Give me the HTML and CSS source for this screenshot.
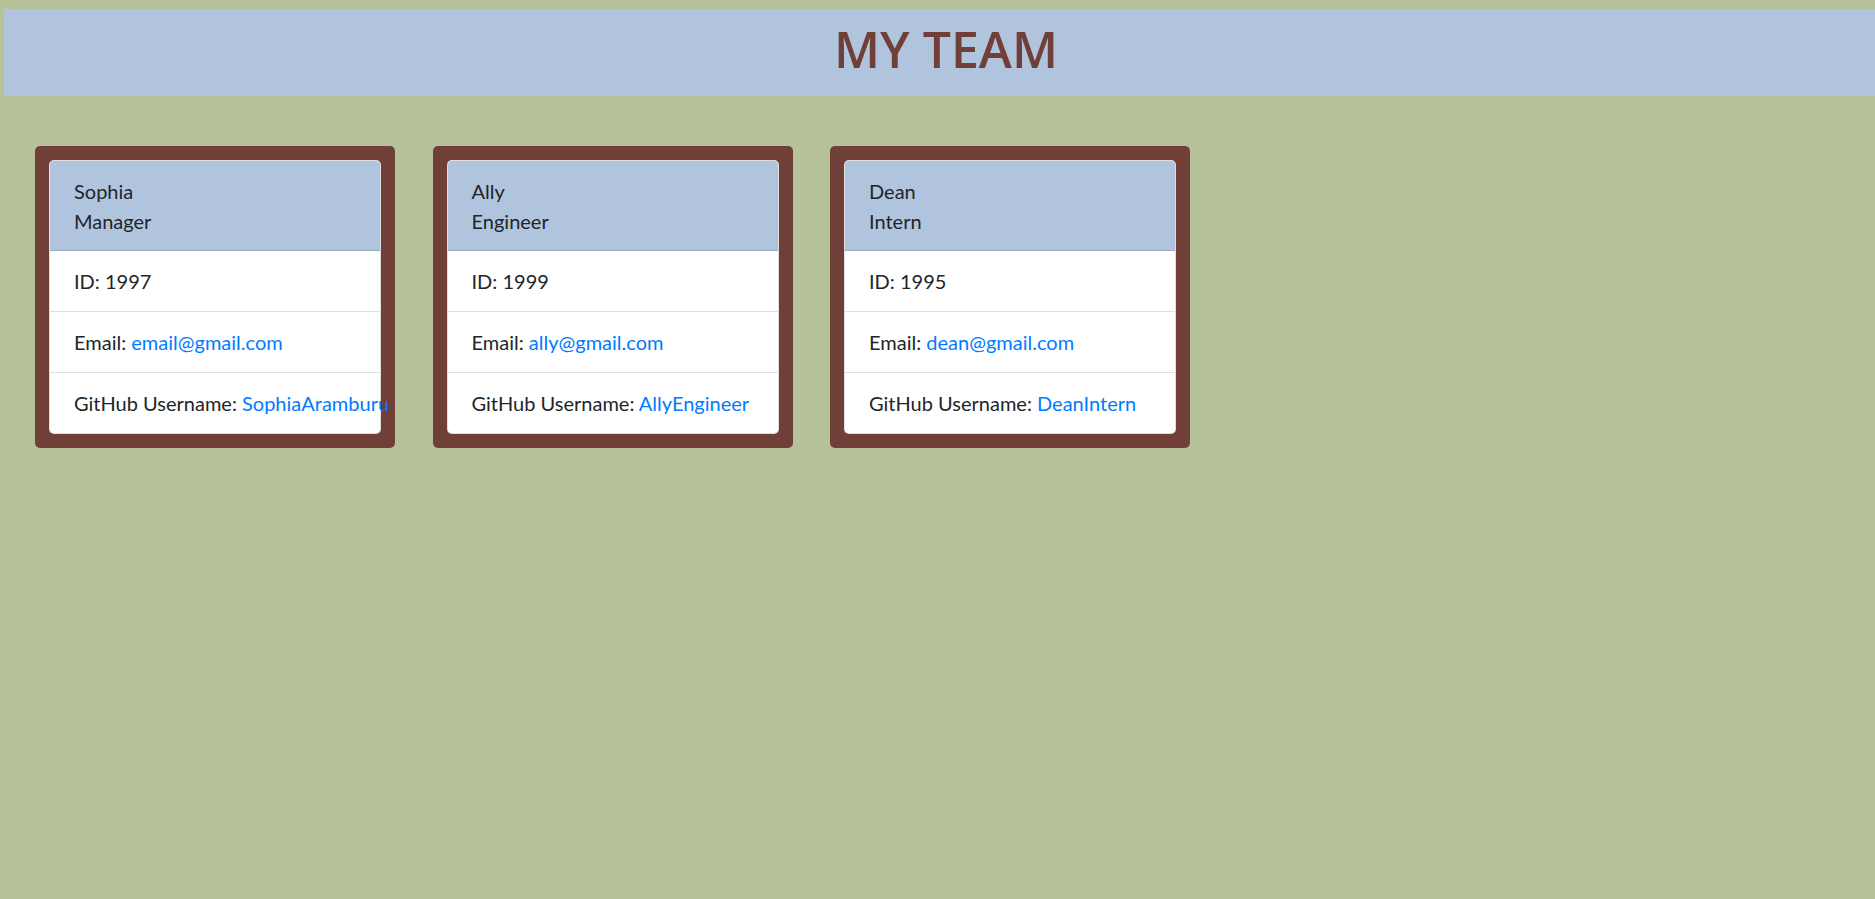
FILE: index.html
```html
<!DOCTYPE html>
<html lang="en">
<head>
<meta charset="utf-8">
<title>My Team</title>
<link rel="stylesheet" href="styles.css">
</head>
<body>
<header class="banner">
  <h1 class="banner-title">MY TEAM</h1>
</header>
<main class="team">
  <section class="member">
    <div class="member-card">
      <div class="member-head">
        <div>Sophia</div>
        <div>Manager</div>
      </div>
      <ul class="member-list">
        <li class="member-item">ID: 1997</li>
        <li class="member-item">Email: <a class="link" href="#">email@gmail.com</a></li>
        <li class="member-item">GitHub Username: <a class="link" href="#">SophiaAramburu</a></li>
      </ul>
    </div>
  </section>
  <section class="member">
    <div class="member-card">
      <div class="member-head">
        <div>Ally</div>
        <div>Engineer</div>
      </div>
      <ul class="member-list">
        <li class="member-item">ID: 1999</li>
        <li class="member-item">Email: <a class="link" href="#">ally@gmail.com</a></li>
        <li class="member-item">GitHub Username: <a class="link" href="#">AllyEngineer</a></li>
      </ul>
    </div>
  </section>
  <section class="member">
    <div class="member-card">
      <div class="member-head">
        <div>Dean</div>
        <div>Intern</div>
      </div>
      <ul class="member-list">
        <li class="member-item">ID: 1995</li>
        <li class="member-item">Email: <a class="link" href="#">dean@gmail.com</a></li>
        <li class="member-item">GitHub Username: <a class="link" href="#">DeanIntern</a></li>
      </ul>
    </div>
  </section>
</main>
</body>
</html>
```
FILE: styles.css
```css
html, body {
  margin: 0;
  padding: 0;
}
body {
  background: #b6c29a;
  font-family: Lato, Roboto, sans-serif;
  font-size: 20px;
  line-height: 30px;
  color: #212529;
  overflow-x: hidden;
}
.banner {
  margin: 9px 0 0 4px;
  height: 87px;
  background: #b0c4de;
  padding-left: 13px;
  display: flex;
  align-items: center;
  justify-content: center;
  box-sizing: border-box;
}
.banner-title {
  margin: 0 0 7px;
  font-family: "Open Sans", sans-serif;
  font-weight: 600;
  font-size: 50px;
  line-height: 60px;
  color: #703f38;
}
.team {
  display: flex;
  align-items: flex-start;
  gap: 37.5px;
  padding: 50px 0 0 35px;
}
.member {
  width: 360px;
  box-sizing: border-box;
  background: #703f38;
  padding: 14px;
  border-radius: 5px;
}
.member-card {
  background: #fff;
  border: 1px solid rgba(0, 0, 0, 0.125);
  border-radius: 5px;
}
.member-head {
  background: #b0c4de;
  padding: 15px 24px 14px;
  border-bottom: 1px solid rgba(0, 0, 0, 0.125);
  border-radius: 4px 4px 0 0;
}
.member-list {
  list-style: none;
  margin: 0;
  padding: 0;
}
.member-item {
  padding: 15px 24px;
  white-space: nowrap;
}
.member-item + .member-item {
  border-top: 1px solid rgba(0, 0, 0, 0.125);
}
.link {
  color: #007bff;
  text-decoration: none;
}
```
